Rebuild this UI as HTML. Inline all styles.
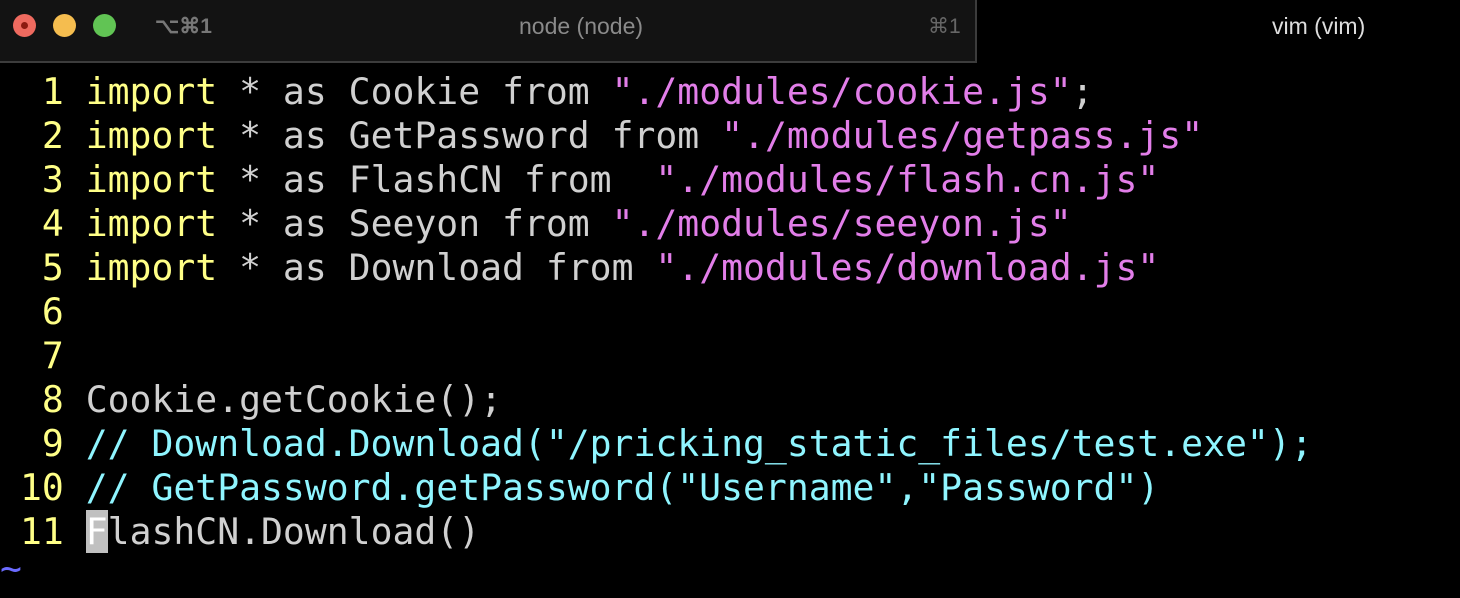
<!DOCTYPE html>
<html><head><style>
body{margin:0;width:1460px;height:580px;background:#000;overflow:hidden;position:relative;font-family:"Liberation Sans",sans-serif}
#tab1{position:absolute;left:0;top:0;width:975px;height:61px;background:#131313;border-right:2px solid #3c3c3c;border-bottom:2px solid #3c3c3c}
.dot{position:absolute;top:14px;width:23px;height:23px;border-radius:50%}
.t{position:absolute;top:13px;font-size:23px;color:#8a8a8a}
pre{position:absolute;left:20px;top:70px;margin:0;font-family:"DejaVu Sans Mono",monospace;font-size:36.4px;line-height:44px;color:#d0d0d0}
.n{color:#ffff87}.k{color:#ffff87}.s{color:#e27ee9}.c{color:#8ff5ff}
.cur{background:#c0c0c0;color:#fff}
</style></head><body>
<div id="tab1">
<div class="dot" style="left:13px;background:#ee6a5f"><div style="position:absolute;left:8px;top:8px;width:7px;height:7px;border-radius:50%;background:#8c1a10"></div></div>
<div class="dot" style="left:53px;background:#f5bd4f"></div>
<div class="dot" style="left:93px;background:#61c454"></div>
<div class="t" style="left:155px;color:#777;font-weight:bold;font-size:21px;top:14px">⌥⌘1</div>
<div class="t" style="left:519px">node (node)</div>
<div class="t" style="left:928px;color:#666;font-size:21px;top:14px">⌘1</div>
</div>
<div class="t" style="left:1272px;color:#ddd">vim (vim)</div>
<pre><span class="n"> 1 </span><span class="k">import</span> * as Cookie from <span class="s">"./modules/cookie.js"</span>;
<span class="n"> 2 </span><span class="k">import</span> * as GetPassword from <span class="s">"./modules/getpass.js"</span>
<span class="n"> 3 </span><span class="k">import</span> * as FlashCN from  <span class="s">"./modules/flash.cn.js"</span>
<span class="n"> 4 </span><span class="k">import</span> * as Seeyon from <span class="s">"./modules/seeyon.js"</span>
<span class="n"> 5 </span><span class="k">import</span> * as Download from <span class="s">"./modules/download.js"</span>
<span class="n"> 6 </span>
<span class="n"> 7 </span>
<span class="n"> 8 </span>Cookie.getCookie();
<span class="n"> 9 </span><span class="c">// Download.Download("/pricking_static_files/test.exe");</span>
<span class="n">10 </span><span class="c">// GetPassword.getPassword("Username","Password")</span>
<span class="n">11 </span><span class="cur">F</span>lashCN.Download()
<span style="color:#6b6bff;position:relative;left:-20px;top:-7px">~</span></pre>
</body></html>
